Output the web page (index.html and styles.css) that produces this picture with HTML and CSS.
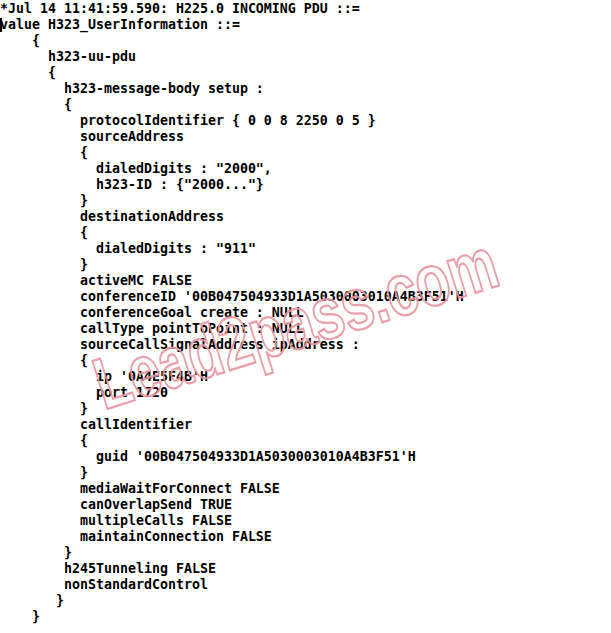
FILE: index.html
```html
<!DOCTYPE html>
<html>
<head>
<meta charset="utf-8">
<link rel="stylesheet" href="styles.css">
</head>
<body>
<div class="page">
<pre class="dump">*Jul 14 11:41:59.590: H225.0 INCOMING PDU ::=
value H323_UserInformation ::=
    {
      h323-uu-pdu
      {
        h323-message-body setup :
        {
          protocolIdentifier { 0 0 8 2250 0 5 }
          sourceAddress
          {
            dialedDigits : "2000",
            h323-ID : {"2000..."}
          }
          destinationAddress
          {
            dialedDigits : "911"
          }
          activeMC FALSE
          conferenceID '00B047504933D1A5030003010A4B3F51'H
          conferenceGoal create : NULL
          callType pointToPoint : NULL
          sourceCallSignalAddress ipAddress :
          {
            ip '0A4E5F4B'H
            port 1720
          }
          callIdentifier
          {
            guid '00B047504933D1A5030003010A4B3F51'H
          }
          mediaWaitForConnect FALSE
          canOverlapSend TRUE
          multipleCalls FALSE
          maintainConnection FALSE
        }
        h245Tunneling FALSE
        nonStandardControl
       }
    }</pre>
<svg class="watermark" width="611" height="633" viewBox="0 0 611 633" aria-hidden="true">
<g transform="translate(104 410) rotate(-17.5) scale(0.763 1)">
<text class="wm-text" x="0" y="0">Lead2pass.com</text>
</g>
</svg>
</div>
</body>
</html>
```
FILE: styles.css
```css
html, body {
  margin: 0;
  padding: 0;
  background: #ffffff;
}

.page {
  position: relative;
  width: 611px;
  height: 633px;
  overflow: hidden;
}

.dump {
  position: relative;
  margin: 0;
  padding: 1px 0 0 0;
  font-family: "DejaVu Sans Mono", "Liberation Mono", monospace;
  font-weight: 700;
  font-size: 13.29px;
  line-height: 16px;
  color: #000000;
  white-space: pre;
}

/* text cursor sitting over the first character of line 2 */
.dump::before {
  content: "";
  position: absolute;
  left: 0;
  top: 18px;
  width: 2px;
  height: 14px;
  background: #000000;
}

.watermark {
  position: absolute;
  left: 0;
  top: 0;
  pointer-events: none;
}

.wm-text {
  font-family: "Liberation Sans", Arial, sans-serif;
  font-weight: 700;
  font-size: 73px;
  fill: none;
  stroke: #e8959f;
  stroke-width: 2.3px;
  opacity: 0.9;
}
```
